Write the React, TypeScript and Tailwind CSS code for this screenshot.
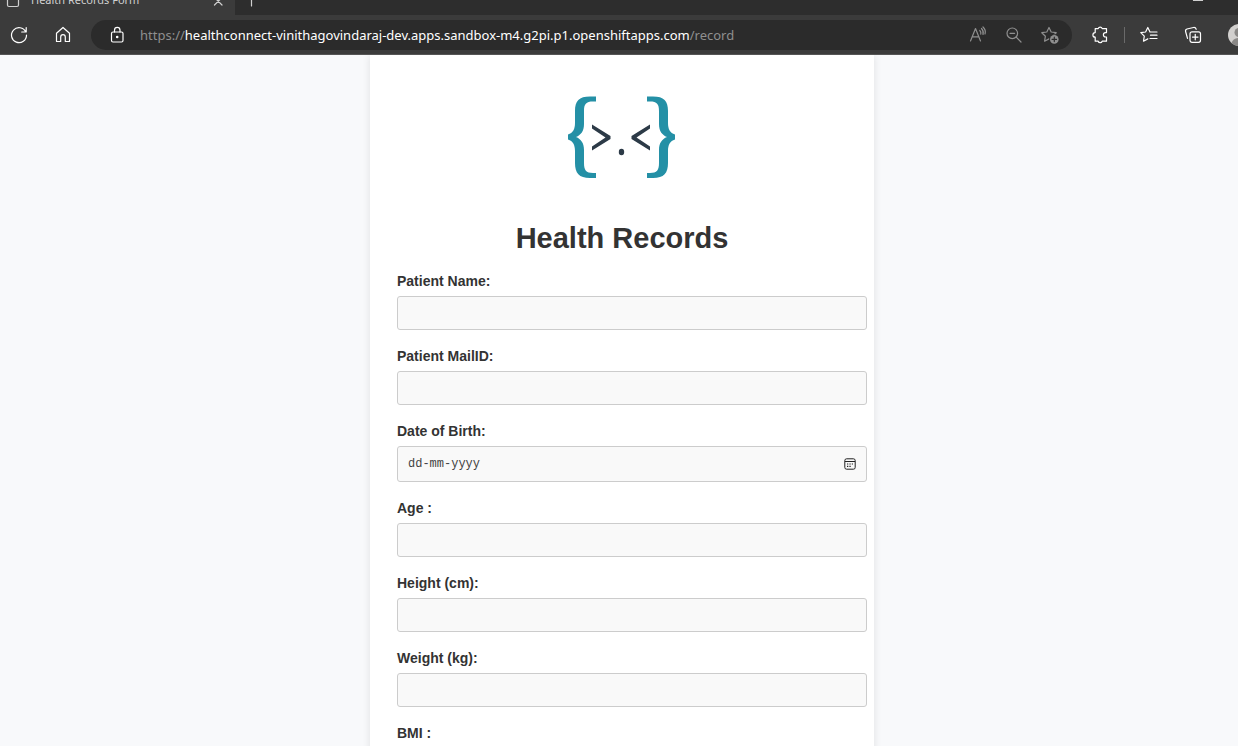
import type { ReactNode } from "react";

type IconProps = { size?: number; className?: string; children: ReactNode };

function Icon({ size = 20, className = "", children }: IconProps) {
  return (
    <svg
      width={size}
      height={size}
      viewBox="0 0 20 20"
      fill="none"
      stroke="currentColor"
      strokeWidth="1.2"
      strokeLinecap="round"
      strokeLinejoin="round"
      className={`shrink-0 ${className}`}
      aria-hidden="true"
    >
      {children}
    </svg>
  );
}

function ToolButton({ label, children }: { label: string; children: ReactNode }) {
  return (
    <button type="button" aria-label={label} className="flex h-8 w-9 shrink-0 items-center justify-center">
      {children}
    </button>
  );
}

function TabStrip() {
  return (
    <div className="flex h-[15px] shrink-0 items-end overflow-hidden bg-[#2d2d2d] text-[#d0d0d0]">
      <div className="flex h-[30px] w-[235px] shrink-0 items-center bg-[#3b3b3b] pl-[3px] pr-[7px]">
        <Icon>
          <rect x="4.5" y="1.5" width="11" height="15" rx="1.5" />
        </Icon>
        <span className="ml-2 flex-1 whitespace-nowrap text-[11px] leading-4">Health Records Form</span>
        <button type="button" aria-label="Close tab" className="flex h-5 w-5 items-center justify-center">
          <Icon>
            <path d="M6.500 7.500L14 15M14 7.500L6.500 15" />
          </Icon>
        </button>
      </div>
      <button type="button" aria-label="New tab" className="ml-1 flex h-8 w-6 items-center justify-center">
        <Icon>
          <path d="M10.500 4V17M4 10.500H17" />
        </Icon>
      </button>
      <button type="button" aria-label="Minimize" className="ml-auto mr-[26px] flex h-8 w-7 items-center justify-center">
        <Icon>
          <path d="M5.500 11.500H14.500" />
        </Icon>
      </button>
    </div>
  );
}

const starPath = "M9 2.500L11.200 7L16.200 7.700L12.600 11.200L13.400 16.200L9 13.900L4.600 16.200L5.400 11.200L1.800 7.700L6.800 7Z";

function Toolbar() {
  return (
    <div className="flex h-10 shrink-0 items-center overflow-hidden border-b border-[#555] bg-[#3b3b3b] pl-px text-white">
      <ToolButton label="Refresh">
        <Icon>
          <path d="M16.800 7A7.500 7.500 0 1 0 17.500 10M17.200 2.500V7H12.700" />
        </Icon>
      </ToolButton>
      <div className="w-2" />
      <ToolButton label="Home">
        <Icon>
          <path d="M3.500 8.300L10 2.500L16.500 8.300V16.500H12.300V12A2.300 2.300 0 0 0 7.700 12V16.500H3.500Z" />
        </Icon>
      </ToolButton>
      <div className="ml-[10px] mr-[10px] flex h-[30px] min-w-0 flex-1 items-center rounded-full bg-[#2b2b2b] pl-4 pr-1 text-[#8f8f8f]">
        <button type="button" aria-label="Site information" className="text-white">
          <Icon>
            <rect x="4.500" y="7" width="11.500" height="10" rx="1.500" />
            <path d="M7.500 7V5.200A2.700 2.700 0 0 1 13 5.200V7" />
            <circle cx="10.200" cy="12" r="0.700" fill="currentColor" />
          </Icon>
        </button>
        <div className="ml-[13px] flex-1 overflow-hidden whitespace-nowrap text-[13px] leading-5">
          <span>https://</span>
          <span className="text-white">healthconnect-vinithagovindaraj-dev.apps.sandbox-m4.g2pi.p1.openshiftapps.com</span>
          <span>/record</span>
        </div>
        <ToolButton label="Read aloud">
          <Icon>
            <path d="M2.500 16L7.500 3.500L12.500 16M4.200 11.800H10.800M11.800 5.500Q13.300 7 12.800 9.200M13.500 3.500Q16 6 15 9.500M15 2Q18.200 5 17 9" />
          </Icon>
        </ToolButton>
        <ToolButton label="Zoom out">
          <Icon>
            <circle cx="8.300" cy="8.300" r="5.300" />
            <path d="M12.200 12.200L17 17M6 8.300H10.600" />
          </Icon>
        </ToolButton>
        <ToolButton label="Add to favorites">
          <Icon>
            <path d={starPath} />
            <circle cx="14.300" cy="14.400" r="5.200" fill="#2b2b2b" stroke="none" />
            <circle cx="14.300" cy="14.400" r="4.300" fill="currentColor" stroke="none" />
            <path d="M14.300 12.200V16.600M12.100 14.400H16.500" stroke="#2b2b2b" />
          </Icon>
        </ToolButton>
      </div>
      <ToolButton label="Extensions">
        <Icon>
          <path d="M5.200 3.600H8.200A2.100 2.100 0 0 1 12.200 3.600H16.500V7.600H15.600A2.200 2.200 0 0 0 15.600 12H16.500V16.200H12.200A2.100 2.100 0 0 1 8.200 16.200H5.200V12.200A2.300 2.300 0 0 1 5.200 7.600Z" />
        </Icon>
      </ToolButton>
      <div className="mx-[6px] h-4 w-px bg-[#6a6a6a]" />
      <ToolButton label="Favorites">
        <Icon>
          <path d="M11 7L8.800 2.500L6.600 7L1.800 7.700L5.300 11.200L4.500 16.200L8.800 13.900M11 7H18M11.500 10.200H18M11 13.500H18" />
        </Icon>
      </ToolButton>
      <div className="w-2" />
      <ToolButton label="Collections">
        <Icon>
          <rect x="7" y="6.800" width="10.500" height="10.500" rx="2" />
          <path d="M12.250 9.300V14.800M9.500 12.050H15M4.500 13.300L2.600 6.500Q2.200 4.500 4 4L10.500 2.500Q12.500 2.200 13.200 4.300" />
        </Icon>
      </ToolButton>
      <button type="button" aria-label="Profile" className="-mr-3 ml-[17px] h-[22px] w-[22px] shrink-0">
        <svg viewBox="0 0 22 22" aria-hidden="true">
          <circle cx="11" cy="11" r="11" fill="#d2d0ce" />
          <circle cx="11" cy="8.500" r="4.500" fill="#8a8886" />
          <path d="M3.500 19Q5 14 11 14T18.500 19A11 11 0 0 1 3.500 19Z" fill="#8a8886" />
        </svg>
      </button>
    </div>
  );
}

function Logo() {
  return (
    <svg width="108" height="84" viewBox="0 0 108 84" role="img" aria-label="Health Connect" className="mx-auto">
      <g fill="#2490a6">
        <path d="M28 1.500H22C11 1.500 7 6 7 16V28C7 34 5 38 0 39.500V44.500C5 46 7 50 7 56V68C7 78 11 83 22 83H28V78H25C18 78 16 75 16 68V55C16 48 13 44 8 42C13 40 16 36 16 29V16C16 9 18 6.500 25 6.500H28Z" />
        <path d="M79 1.500H85C96 1.500 100 6 100 16V28C100 34 102 38 107 39.500V44.500C102 46 100 50 100 56V68C100 78 96 83 85 83H79V78H82C89 78 91 75 91 68V55C91 48 94 44 99 42C94 40 91 36 91 29V16C91 9 89 6.500 82 6.500H79Z" />
      </g>
      <g fill="#2c3a47">
        <path d="M24 29.500L42.500 41V44L24 55.500V51.500L37.500 42.500L24 33.500Z" />
        <path d="M82 29.500L63.500 41V44L82 55.500V51.500L68.500 42.500L82 33.500Z" />
        <ellipse cx="53.500" cy="57" rx="2.700" ry="3.300" />
      </g>
    </svg>
  );
}

const inputClass = "w-full rounded-[3px] border border-[#ccc] bg-[#f9f9f9] px-[10px]";

function Field({ id, label, type = "text" }: { id: string; label: string; type?: string }) {
  return (
    <div className="flex flex-col gap-[5px]">
      <label htmlFor={id} className="text-sm leading-5 font-bold">
        {label}
      </label>
      <input id={id} name={id} type={type} className={`h-[34px] ${inputClass}`} />
    </div>
  );
}

function DateField() {
  return (
    <div className="flex flex-col gap-[5px]">
      <label htmlFor="dob" className="text-sm leading-5 font-bold">
        Date of Birth:
      </label>
      <div className={`flex h-9 items-center ${inputClass}`}>
        <input
          id="dob"
          name="dob"
          type="text"
          placeholder="dd-mm-yyyy"
          className="min-w-0 flex-1 bg-transparent font-['Liberation_Mono',monospace] text-xs outline-none placeholder:text-[#444]"
        />
        <button type="button" aria-label="Choose date" className="flex h-4 w-3 items-center justify-center text-[#222]">
          <svg width="12" height="12" viewBox="0 0 12 12" fill="none" stroke="currentColor" aria-hidden="true">
            <rect x="0.800" y="0.800" width="10.400" height="10.400" rx="1.800" />
            <path d="M1 3.500H11" />
            <path d="M3 6H4.300M5.400 6H6.700M7.800 6H9M3 8.400H4.300M5.400 8.400H6.700" strokeWidth="1.200" />
          </svg>
        </button>
      </div>
    </div>
  );
}

export default function App() {
  return (
    <div className="flex h-screen flex-col overflow-hidden bg-[#f8f9fb] font-['Noto_Sans',sans-serif]">
      <header>
        <TabStrip />
        <Toolbar />
      </header>
      <main className="flex min-h-0 flex-1 items-start justify-center overflow-hidden pl-[6px] font-['Liberation_Sans',Arial,sans-serif] text-[#333]">
        <form className="w-full max-w-[504px] bg-white pt-10 pr-[7px] pb-8 pl-[27px] shadow-[0_0_8px_rgba(0,0,0,0.1)]">
          <div className="mr-5">
            <Logo />
            <h1 className="mt-[41px] mb-[15px] text-center text-[29px] leading-9 font-bold">Health Records</h1>
          </div>
          <div className="flex flex-col gap-4">
            <Field id="name" label="Patient Name:" />
            <Field id="mail" label="Patient MailID:" type="email" />
            <DateField />
            <Field id="age" label="Age :" />
            <Field id="height" label="Height (cm):" />
            <Field id="weight" label="Weight (kg):" />
            <Field id="bmi" label="BMI :" />
          </div>
        </form>
      </main>
    </div>
  );
}
